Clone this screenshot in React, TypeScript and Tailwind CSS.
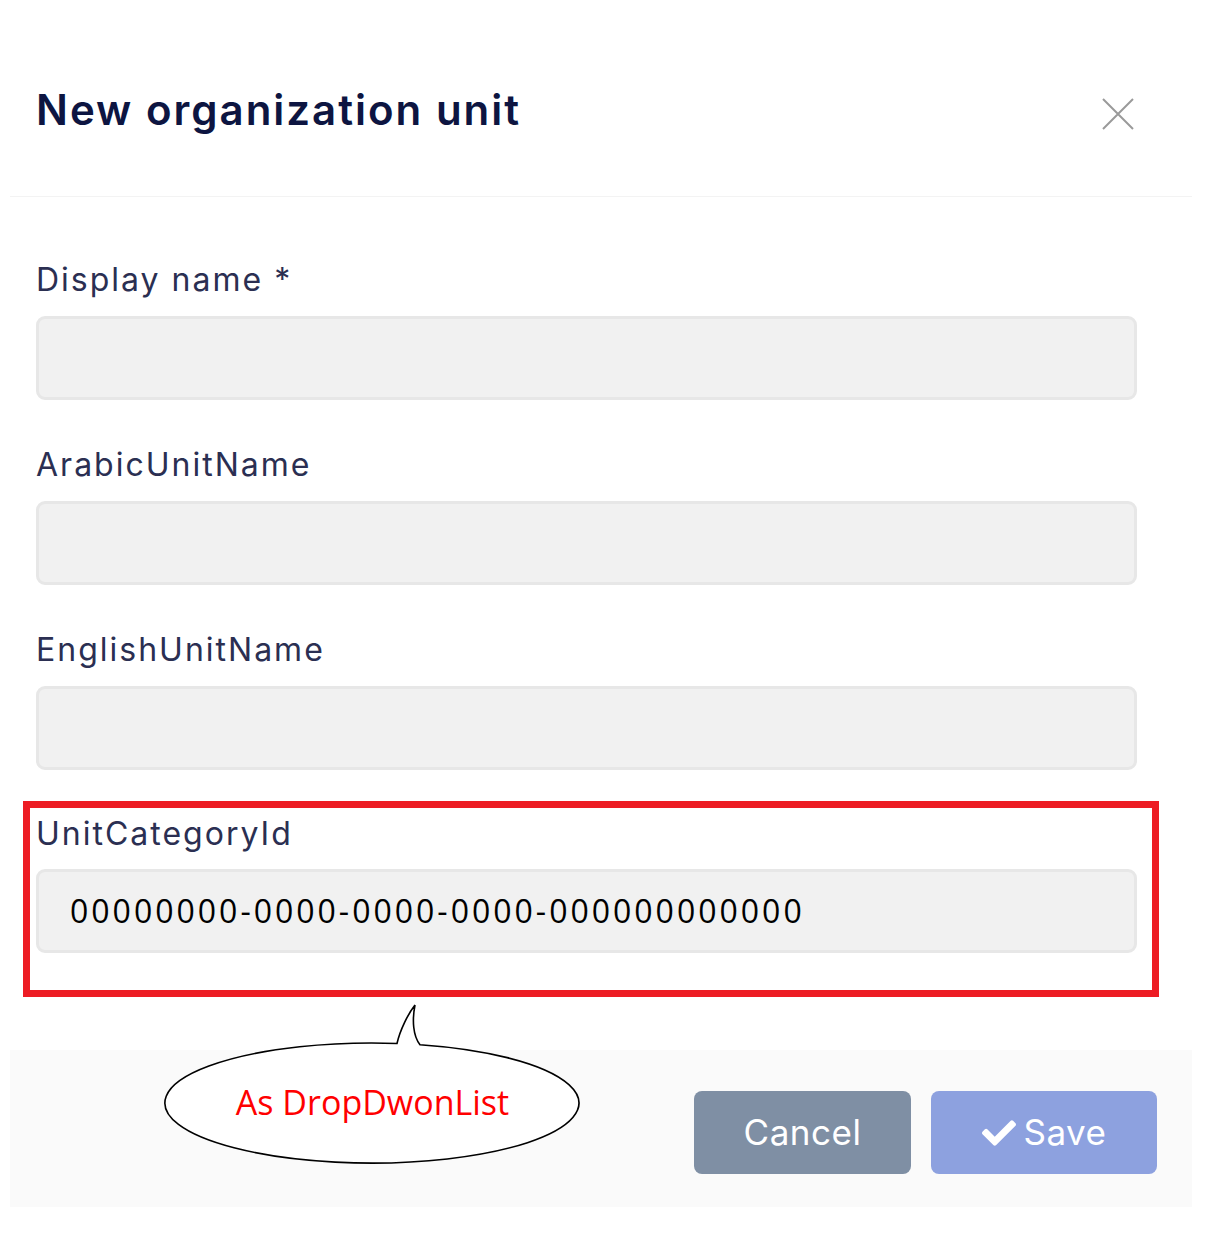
import { FaCheck } from "react-icons/fa";

const labelCls = "block text-[32px] leading-[40px] text-[#2b2f52] tracking-[2px]";
const inputCls = "h-[84px] w-full rounded-[9px] border-[3px] border-[#e7e7e7] bg-[#f1f1f1]";

function Field({ label }: { label: string }) {
  return (
    <div>
      <label className={labelCls}>{label}</label>
      <div className={`mt-[16px] ${inputCls}`} />
    </div>
  );
}

function Callout() {
  return (
    <div className="absolute left-[160px] top-[1000px] w-[425px] h-[170px]">
      <svg width="425" height="170" viewBox="0 0 425 170" className="absolute inset-0">
        <path
          d="M260,44.7 A207,60 0 1,1 237,43.5 C240,30 248,14 255,5 C252,20 253,36 260,44.7 Z"
          fill="#fff"
          stroke="#000"
          strokeWidth="1.6"
        />
      </svg>
      <div className="absolute left-0 right-0 top-[80px] text-center text-[34px] leading-[44px] text-[#ff0000] font-['Open_Sans',sans-serif]">
        As DropDwonList
      </div>
    </div>
  );
}

export default function App() {
  return (
    <div className="relative w-[1225px] h-[1234px] bg-white font-['Inter',sans-serif] overflow-hidden">
      <div className="ml-[10px] w-[1182px]">
        {/* header */}
        <div className="h-[197px] border-b border-[#f3f3f3] flex items-start justify-between pl-[26px] pr-[58px] pt-[84px]">
          <h1 className="text-[42px] leading-[52px] font-semibold text-[#0d1541] tracking-[2px]">New organization unit</h1>
          <button className="mt-[14px] w-[32px] h-[32px]">
            <svg width="32" height="32" viewBox="0 0 32 32">
              <path d="M1 1 L31 31 M31 1 L1 31" stroke="#9a9a9a" strokeWidth="2" />
            </svg>
          </button>
        </div>

        {/* body */}
        <div className="pl-[26px] pr-[55px] pt-[63px] flex flex-col gap-[45px]">
          <Field label="Display name *" />
          <Field label="ArabicUnitName" />
          <Field label="EnglishUnitName" />
        </div>
        <div className="pl-[13px] pr-[33px] mt-[31px]">
          <div className="border-[7px] border-[#ed1c24] pl-[6px] pr-[15px] pt-[6px] pb-[37px]">
            <label className={labelCls}>UnitCategoryId</label>
            <div className={`mt-[15px] ${inputCls} flex items-center pl-[31px] text-[32px] tracking-[3px] text-black font-['Open_Sans',sans-serif]`}>
              00000000-0000-0000-0000-000000000000
            </div>
          </div>
        </div>

        {/* footer */}
        <div className="mt-[53px] h-[157px] bg-[#fafafa] flex items-start justify-end gap-[20px] pr-[35px] pt-[41px]">
          <button className="w-[217px] h-[83px] rounded-[8px] bg-[#7f8fa4] text-white text-[35px] tracking-[0.5px]">
            Cancel
          </button>
          <button className="w-[226px] h-[83px] rounded-[8px] bg-[#8da1df] text-white text-[35px] tracking-[0.5px] flex items-center justify-center gap-[8px]">
            <FaCheck className="w-[34px] h-[34px]" />
            Save
          </button>
        </div>
      </div>
      <Callout />
    </div>
  );
}
